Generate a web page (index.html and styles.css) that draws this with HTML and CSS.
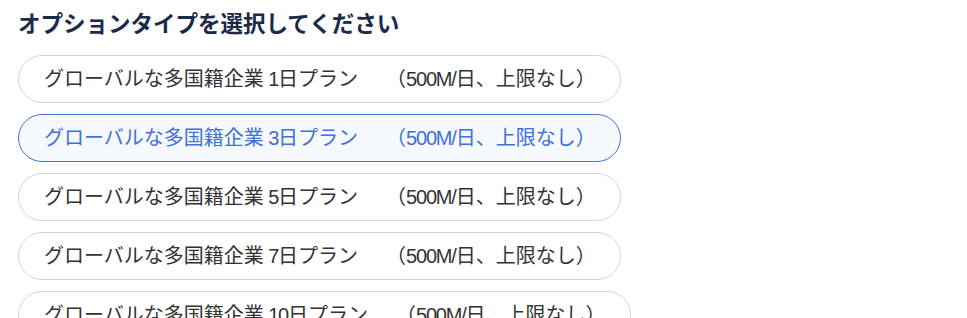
FILE: index.html
```html
<!DOCTYPE html>
<html lang="ja">
<head>
<meta charset="utf-8">
<link rel="stylesheet" href="styles.css">
</head>
<body>
<div class="panel">
  <h2 class="title">オプションタイプを選択してください</h2>
  <div class="options">
    <button class="opt">グローバルな多国籍企業<span class="lat"> 1</span>日プラン<span class="sep">　</span>（<span class="lat">500M/</span>日、上限なし）</button>
    <button class="opt selected">グローバルな多国籍企業<span class="lat"> 3</span>日プラン<span class="sep">　</span>（<span class="lat">500M/</span>日、上限なし）</button>
    <button class="opt">グローバルな多国籍企業<span class="lat"> 5</span>日プラン<span class="sep">　</span>（<span class="lat">500M/</span>日、上限なし）</button>
    <button class="opt">グローバルな多国籍企業<span class="lat"> 7</span>日プラン<span class="sep">　</span>（<span class="lat">500M/</span>日、上限なし）</button>
    <button class="opt">グローバルな多国籍企業<span class="lat"> 10</span>日プラン<span class="sep">　</span>（<span class="lat">500M/</span>日、上限なし）</button>
  </div>
</div>
</body>
</html>
```
FILE: styles.css
```css
html, body {
  margin: 0;
  background: #ffffff;
}
.panel {
  padding: 11px 18px 0 18px;
  font-family: "Liberation Sans", "Noto Sans CJK JP", sans-serif;
}
.title {
  margin: 0 0 16px 0;
  font-size: 22.5px;
  line-height: 28px;
  font-weight: bold;
  color: #1a2a48;
}
.options {
  display: flex;
  flex-direction: column;
  align-items: flex-start;
  gap: 11px;
}
.opt {
  box-sizing: border-box;
  height: 48px;
  padding: 0 24px 0 25px;
  border: 1px solid #d6d6d6;
  border-radius: 24px;
  background: #ffffff;
  color: #333333;
  font-family: "Liberation Sans", "Noto Sans CJK JP", sans-serif;
  font-size: 20px;
  line-height: 46px;
  white-space: nowrap;
  text-align: left;
}
.opt .lat {
  letter-spacing: -1.2px;
}
.opt .sep {
  display: inline-block;
  width: 28px;
}
.opt.selected {
  border-color: #4a72d6;
  background: #f5f8fd;
  color: #4170d8;
}
```
